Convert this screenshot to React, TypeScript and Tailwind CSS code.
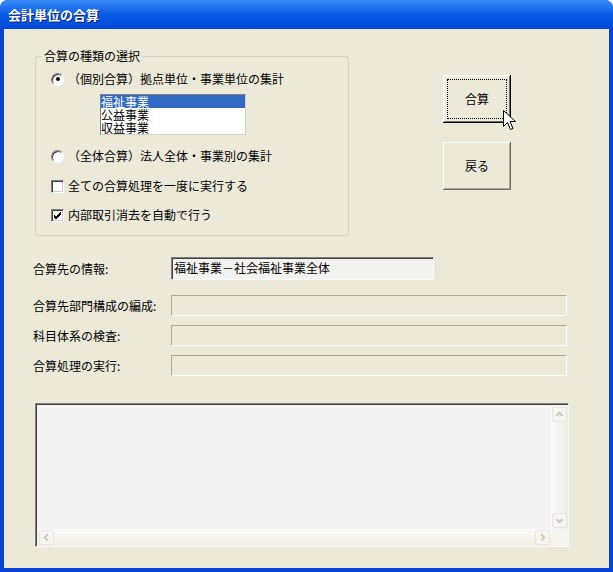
const font = { fontFamily: '"Noto Sans CJK JP", "Noto Sans", sans-serif' };

const Radio = ({ checked, label }: { checked?: boolean; label: string }) => (
  <div className="flex items-center h-[14px]">
    <div className="w-[13px] h-[13px] rounded-full border border-t-[#808080] border-l-[#808080] border-r-[#ffffff] border-b-[#ffffff] bg-white flex items-center justify-center shadow-[inset_1px_1px_#404040]">
      {checked && <div className="w-[4px] h-[4px] rounded-full bg-black" />}
    </div>
    <span className="ml-[4px] text-[12px] leading-[14px] text-black">{label}</span>
  </div>
);

const Check = ({ checked, label }: { checked?: boolean; label: string }) => (
  <div className="flex items-center h-[14px]">
    <div className="w-[13px] h-[13px] bg-white border border-t-[#808080] border-l-[#808080] border-r-[#ffffff] border-b-[#ffffff] shadow-[inset_1px_1px_#404040,inset_-1px_-1px_#D4D0C8] flex items-center justify-center">
      {checked && (
        <svg width="9" height="9" viewBox="0 0 9 9">
          <path d="M1 4 L3 6 L8 1 M1 5 L3 7 L8 2 M1 6 L3 8 L8 3" stroke="#000" strokeWidth="1" fill="none" />
        </svg>
      )}
    </div>
    <span className="ml-[4px] text-[12px] leading-[14px] text-black">{label}</span>
  </div>
);

const Button = ({ label, focused }: { label: string; focused?: boolean }) => (
  <div
    className={`relative w-[68px] h-[48px] bg-[#ECE9D8] flex items-center justify-center text-[12px] text-black ${
      focused
        ? "shadow-[inset_-1px_-1px_#000000,inset_1px_1px_#ffffff,inset_-2px_-2px_#716F64,inset_2px_2px_#F5F4EE]"
        : "shadow-[inset_-1px_-1px_#716F64,inset_1px_1px_#ffffff,inset_-2px_-2px_#ACA899]"
    }`}
  >
    {focused && <div className="absolute inset-[4px] border border-dotted border-black" />}
    {label}
  </div>
);

const FieldRow = ({ label, value, wide }: { label: string; value?: string; wide?: boolean }) => (
  <div className="flex items-center">
    <div className="w-[138px] text-[12px] text-black">{label}</div>
    {wide ? (
      <div className="w-[396px] h-[21px] border border-t-[#ACA899] border-l-[#ACA899] border-r-[#ffffff] border-b-[#ffffff] bg-[#ECE9D8]" />
    ) : (
      <div className="w-[263px] h-[23px] bg-[#F2F2EF] border border-t-[#808080] border-l-[#808080] border-r-[#ffffff] border-b-[#ffffff] shadow-[inset_1px_1px_#404040] pl-[2px] text-[12px] leading-[19px] text-black">
        {value}
      </div>
    )}
  </div>
);

const ArrowBtn = ({ dir }: { dir: "up" | "down" | "left" | "right" }) => {
  const d = {
    up: "M4 9 L7.5 5.5 L11 9",
    down: "M4 6 L7.5 9.5 L11 6",
    left: "M9 4 L5.5 7.5 L9 11",
    right: "M6 4 L9.5 7.5 L6 11",
  }[dir];
  return (
    <div className="w-[15px] h-[15px] rounded-[2px] border border-[#E8E6DC] bg-[#F6F5F0] flex items-center justify-center">
      <svg width="15" height="15" viewBox="0 0 15 15">
        <path d={d} stroke="#C9C7BA" strokeWidth="2" fill="none" />
      </svg>
    </div>
  );
};

export default function App() {
  return (
    <div className="w-[613px] h-[572px] flex flex-col bg-[#0842D6] rounded-t-[8px] overflow-hidden" style={font}>
      {/* Title bar */}
      <div className="h-[29px] shrink-0 bg-gradient-to-b from-[#3A8CF8] via-[#0A5BE4] to-[#0049D6] flex items-center pl-[8px]">
        <span className="text-white text-[13px] font-bold [text-shadow:1px_1px_#0A1E80]">会計単位の合算</span>
      </div>

      {/* Body */}
      <div className="relative flex-1 mx-[4px] mb-[4px] bg-[#ECE9D8] flex flex-col">
        <div className="flex">
          {/* Group box */}
          <div className="relative mt-[27px] ml-[31px] w-[314px] h-[180px] border border-[#D0D0BF] rounded-[3px]">
            <span className="absolute left-[6px] top-[-8px] px-[2px] bg-[#ECE9D8] text-[12px] leading-[14px] text-black">
              合算の種類の選択
            </span>
            <div className="flex flex-col pl-[15px] pt-[15px]">
              <Radio checked label="（個別合算）拠点単位・事業単位の集計" />
              <div className="mt-[8px] ml-[49px] w-[146px] h-[41px] bg-white border border-t-[#808080] border-l-[#808080] border-r-[#D4D0C8] border-b-[#D4D0C8] text-[12px] leading-[13px] text-black overflow-hidden">
                <div className="bg-[#316AC5] text-white h-[13px]">福祉事業</div>
                <div className="h-[13px]">公益事業</div>
                <div className="h-[13px]">収益事業</div>
              </div>
              <div className="mt-[14px]">
                <Radio label="（全体合算）法人全体・事業別の集計" />
              </div>
              <div className="mt-[16px]">
                <Check label="全ての合算処理を一度に実行する" />
              </div>
              <div className="mt-[15px]">
                <Check checked label="内部取引消去を自動で行う" />
              </div>
            </div>
          </div>

          {/* Buttons */}
          <div className="ml-[94px] mt-[46px] flex flex-col gap-[19px]">
            <Button label="合算" focused />
            <Button label="戻る" />
          </div>
        </div>

        {/* Fields */}
        <div className="ml-[29px] mt-[21px] flex flex-col">
          <FieldRow label="合算先の情報:" value="福祉事業－社会福祉事業全体" />
          <div className="mt-[15px]">
            <FieldRow label="合算先部門構成の編成:" wide />
          </div>
          <div className="mt-[9px]">
            <FieldRow label="科目体系の検査:" wide />
          </div>
          <div className="mt-[9px]">
            <FieldRow label="合算処理の実行:" wide />
          </div>
        </div>

        {/* Log area */}
        <div className="ml-[31px] mt-[27px] w-[534px] h-[144px] bg-[#F3F3F3] border border-t-[#808080] border-l-[#808080] border-r-[#F8F8F8] border-b-[#F8F8F8] shadow-[inset_1px_1px_#404040] flex flex-col pl-[2px] pt-[2px]">
          <div className="flex flex-1">
            <div className="flex-1" />
            <div className="w-[17px] bg-gradient-to-r from-[#FBFBF8] to-[#EFEEE6] flex flex-col items-center justify-between py-[1px]">
              <ArrowBtn dir="up" />
              <ArrowBtn dir="down" />
            </div>
          </div>
          <div className="flex h-[17px]">
            <div className="flex-1 bg-gradient-to-b from-[#FBFBF8] to-[#EFEEE6] flex items-center justify-between px-[1px]">
              <ArrowBtn dir="left" />
              <ArrowBtn dir="right" />
            </div>
            <div className="w-[17px] bg-[#F6F5F0]" />
          </div>
        </div>

        {/* Mouse cursor */}
        <svg className="absolute left-[499px] top-[81px]" width="14" height="22" viewBox="0 0 14 22">
          <path
            d="M0.5 0.5 L0.5 16.5 L4.5 12.5 L7.5 19.5 L10 18.5 L7 11.5 L12.5 11.5 Z"
            fill="#ffffff"
            stroke="#000000"
            strokeWidth="1"
          />
        </svg>
      </div>
    </div>
  );
}
